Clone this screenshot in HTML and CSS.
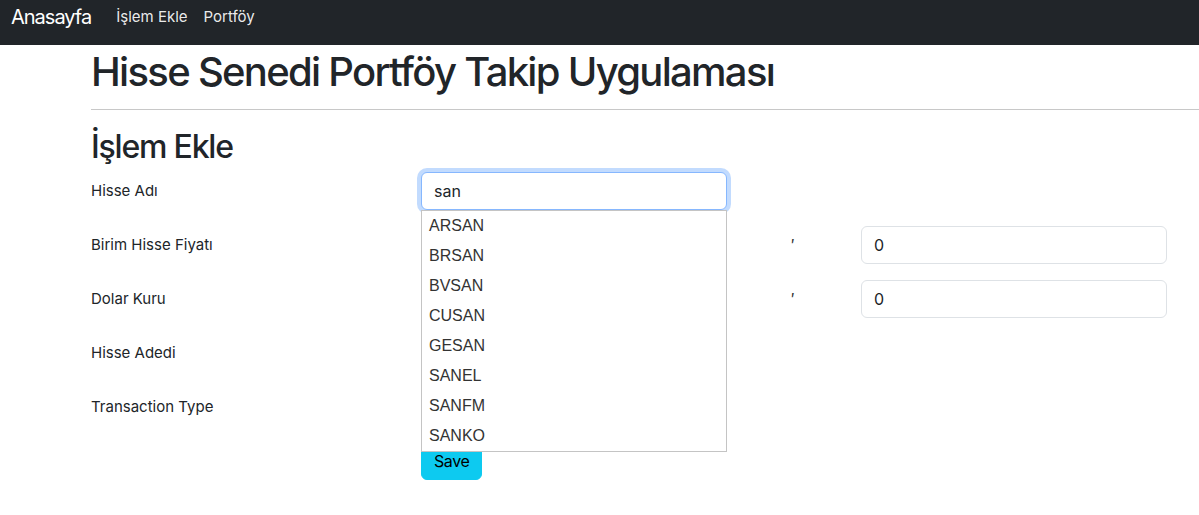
FILE: index.html
```html
<!DOCTYPE html>
<html lang="tr">
<head>
<meta charset="utf-8">
<title>Hisse Senedi Portföy Takip Uygulaması</title>
<link rel="stylesheet" href="styles.css">
</head>
<body>
<nav class="navbar">
  <a class="brand" href="#">Anasayfa</a>
  <a class="nav-link" href="#">İşlem Ekle</a>
  <a class="nav-link" href="#">Portföy</a>
</nav>
<main class="page">
  <h1 class="title">Hisse Senedi Portföy Takip Uygulaması</h1>
  <hr class="rule">
  <h2 class="subtitle">İşlem Ekle</h2>
  <form class="form">
    <div class="row">
      <label class="label">Hisse Adı</label>
      <div class="field">
        <input class="input focused" type="text" value="san">
        <ul class="suggest">
          <li>ARSAN</li>
          <li>BRSAN</li>
          <li>BVSAN</li>
          <li>CUSAN</li>
          <li>GESAN</li>
          <li>SANEL</li>
          <li>SANFM</li>
          <li>SANKO</li>
        </ul>
      </div>
    </div>
    <div class="row">
      <label class="label">Birim Hisse Fiyatı</label>
      <div class="field"><input class="input" type="text" value=""></div>
      <span class="mark">′</span>
      <div class="field"><input class="input" type="text" value="0"></div>
    </div>
    <div class="row">
      <label class="label">Dolar Kuru</label>
      <div class="field"><input class="input" type="text" value=""></div>
      <span class="mark">′</span>
      <div class="field"><input class="input" type="text" value="0"></div>
    </div>
    <div class="row">
      <label class="label">Hisse Adedi</label>
      <div class="field"><input class="input" type="text" value=""></div>
    </div>
    <div class="row">
      <label class="label">Transaction Type</label>
      <div class="field"><input class="input" type="text" value=""></div>
    </div>
    <div class="row">
      <span class="label"></span>
      <div class="field"><button class="btn" type="button">Save</button></div>
    </div>
  </form>
</main>
</body>
</html>
```
FILE: styles.css
```css
* { box-sizing: border-box; }
html, body { margin: 0; padding: 0; }
body {
  font-family: Inter, "Noto Sans", sans-serif;
  font-size: 16px;
  line-height: 1.5;
  color: #212529;
  background: #fff;
}
.navbar {
  height: 45px;
  background: #212529;
  display: flex;
  align-items: flex-start;
  padding: 4px 11px 0;
}
.navbar a { text-decoration: none; }
.brand {
  color: #fff;
  font-size: 20px;
  line-height: 26px;
  letter-spacing: -1px;
  margin-right: 25px;
}
.nav-link {
  color: rgba(255,255,255,0.92);
  font-size: 15px;
  line-height: 26px;
  margin-right: 16px;
}
.page {
  padding-left: 91px;
}
.title {
  font-size: 40px;
  font-weight: 500;
  line-height: 48px;
  letter-spacing: -1.7px;
  margin: 3px 0 0;
}
.rule {
  border: 0;
  border-top: 1px solid #c8c8c8;
  margin: 13px 0 0;
}
.subtitle {
  font-size: 32px;
  font-weight: 500;
  line-height: 38px;
  letter-spacing: -1.2px;
  margin: 18px 0 6px;
}
.row {
  display: grid;
  grid-template-columns: 330px 306px 134px 306px;
  margin-bottom: 16px;
  height: 38px;
}
.label {
  padding-top: 7px;
  line-height: 24px;
  font-size: 15px;
}
.field { position: relative; }
.input {
  width: 306px;
  height: 38px;
  padding: 6px 12px;
  border: 1px solid #dee2e6;
  border-radius: 6px;
  font: inherit;
  font-size: 16px;
  color: #212529;
  background: #fff;
}
.input.focused {
  border-color: #86b7fe;
  outline: 0;
  box-shadow: 0 0 0 4px rgba(13,110,253,0.25);
}
.mark {
  padding-left: 64px;
  padding-top: 7px;
  line-height: 24px;
  color: #333;
}
.suggest {
  position: absolute;
  z-index: 10;
  left: 0;
  top: 38px;
  width: 306px;
  margin: 0;
  padding: 0;
  list-style: none;
  background: #fff;
  border: 1px solid #c4c4c4;
  font-family: "Liberation Sans", Arial, sans-serif;
  font-size: 16px;
  color: #333;
}
.suggest li {
  height: 30px;
  line-height: 30px;
  padding-left: 7px;
}
.btn {
  height: 38px;
  padding: 6px 12px;
  border: 1px solid #0dcaf0;
  border-radius: 6px;
  background: #0dcaf0;
  color: #000;
  font: inherit;
  font-size: 16px;
  line-height: 24px;
  letter-spacing: -0.4px;
}
```
